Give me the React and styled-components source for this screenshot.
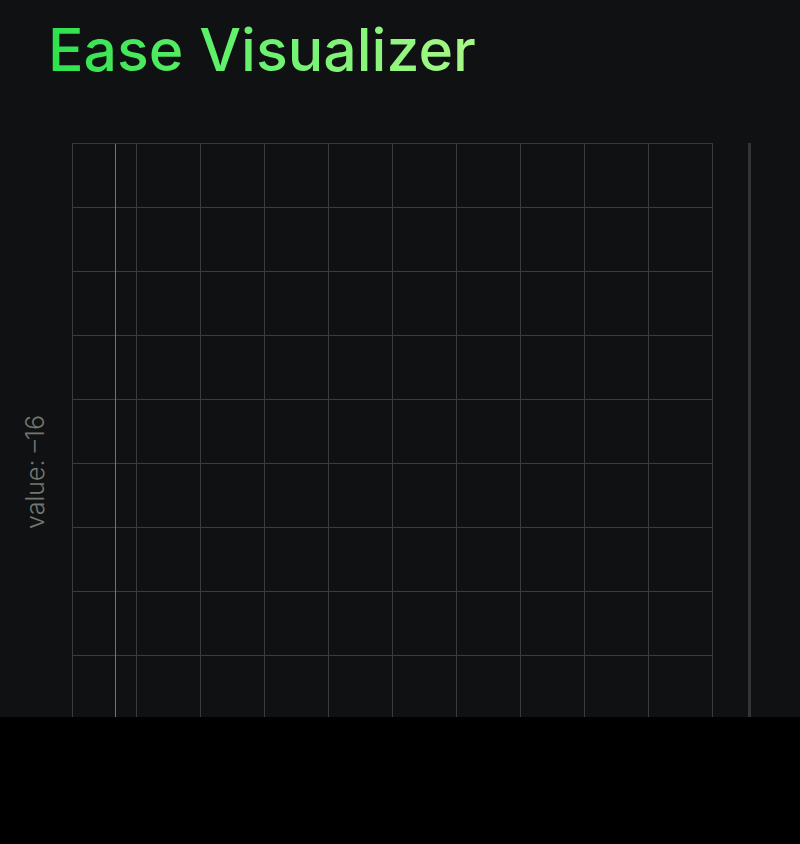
import React from "react";
import styled, { createGlobalStyle } from "styled-components";

const Global = createGlobalStyle`
  html, body { margin: 0; padding: 0; background: #000; }
  * { box-sizing: border-box; }
`;

const Page = styled.div`
  height: 717px;
  background: #0f1113;
  overflow: hidden;
  font-family: Inter, "Liberation Sans", sans-serif;
`;

const Title = styled.h1`
  margin: 0;
  padding: 14px 0 0 48px;
  font-size: 59px;
  line-height: 72px;
  font-weight: 500;
  letter-spacing: 0px;
  background: linear-gradient(90deg, #1fdd44 0%, #5ef06a 45%, #a8f887 100%);
  -webkit-background-clip: text;
  background-clip: text;
  color: transparent;
  display: inline-block;
`;

const Stage = styled.div`
  display: flex;
  margin-top: 57px;
  height: 658px;
`;

const LabelCol = styled.div`
  width: 72px;
  display: flex;
  align-items: center;
  justify-content: center;
`;

const ValueLabel = styled.div`
  transform: rotate(-90deg);
  white-space: nowrap;
  color: #74776f;
  font-size: 25px;
  font-weight: 300;
  font-family: Inter, "Liberation Sans", sans-serif;
  margin-left: -2px;
`;

const Grid = styled.div`
  position: relative;
  width: 641px;
  height: 100%;
  border-top: 1px solid #363935;
  background-image:
    linear-gradient(to right, #3a3d39 1px, transparent 1px),
    linear-gradient(to bottom, #3a3d39 1px, transparent 1px);
  background-size: 64px 64px;
  background-position: 0 -1px;
`;

const Progress = styled.div`
  position: absolute;
  top: 0;
  bottom: 0;
  left: 43px;
  width: 1px;
  background-color: #3f9a3a;
`;

const Track = styled.div`
  width: 3px;
  margin-left: 35px;
  background: #333537;
`;

export default function App() {
  return (
    <>
      <Global />
      <Page>
        <Title>Ease Visualizer</Title>
        <Stage>
          <LabelCol>
            <ValueLabel>value: –16</ValueLabel>
          </LabelCol>
          <Grid>
            <Progress />
          </Grid>
          <Track />
        </Stage>
      </Page>
    </>
  );
}
